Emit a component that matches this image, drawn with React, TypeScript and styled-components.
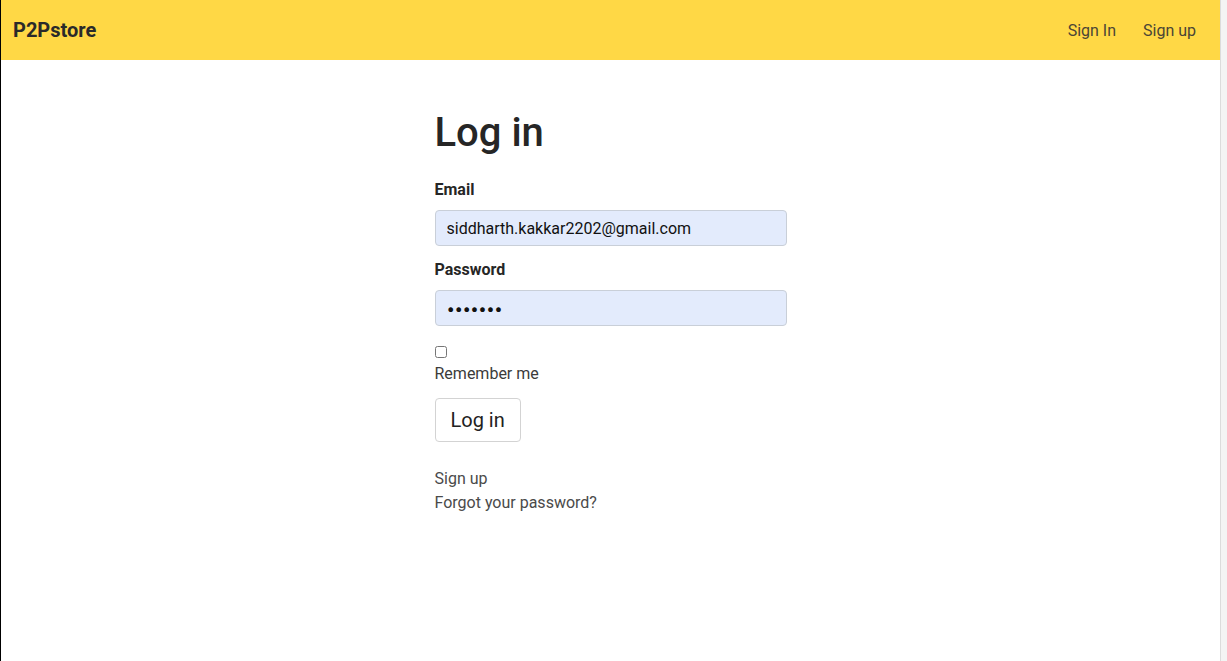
import React from "react";
import styled, { createGlobalStyle } from "styled-components";

const GlobalStyle = createGlobalStyle`
  html, body { margin: 0; padding: 0; height: 100%; }
  body {
    font-family: Roboto, "Noto Sans", "Liberation Sans", sans-serif;
    color: #212529;
    background: #ffffff;
  }
  #root { height: 100%; }
`;

const Shell = styled.div`
  display: flex;
  height: 661px;
  border-left: 1px solid #000;
  box-sizing: border-box;
`;

const Main = styled.div`
  flex: 1;
  display: flex;
  flex-direction: column;
  min-width: 0;
`;

const Gutter = styled.div`
  width: 6px;
  background: #f4f4f4;
  border-left: 1px solid #dcdcdc;
`;

const NavBar = styled.header`
  height: 60px;
  background: #ffd845;
  display: flex;
  align-items: center;
  justify-content: space-between;
  padding: 0 24px 0 12px;
`;

const Brand = styled.a`
  font-size: 20px;
  font-weight: 700;
  color: #2a2a2a;
  text-decoration: none;
`;

const NavLinks = styled.nav`
  display: flex;
  gap: 27px;
`;

const NavLink = styled.a`
  font-size: 16px;
  color: #4a4536;
  text-decoration: none;
`;

const Content = styled.main`
  width: 352px;
  margin: 0 auto;
  padding-top: 49px;
  display: flex;
  flex-direction: column;
  align-items: flex-start;
`;

const Title = styled.h1`
  font-size: 40px;
  font-weight: 500;
  line-height: 48px;
  margin: 0 0 21px;
  color: #262626;
`;

const Field = styled.div`
  display: flex;
  flex-direction: column;
  width: 100%;
  margin-bottom: ${(p: { $mb: number }) => p.$mb}px;
`;

const Label = styled.label`
  font-size: 16px;
  font-weight: 700;
  line-height: 24px;
  margin-bottom: 8px;
  color: #262626;
`;

const Input = styled.input<{ $secret?: boolean }>`
  box-sizing: border-box;
  width: 100%;
  height: 36px;
  padding: 0 11px;
  font-family: ${(p) => (p.$secret ? "Inter, sans-serif" : "inherit")};
  font-size: ${(p) => (p.$secret ? "15px" : "16px")};
  letter-spacing: ${(p) => (p.$secret ? "-0.5px" : "normal")};
  color: #111;
  background: #e3ebfc;
  border: 1px solid #c9cfd8;
  border-radius: 4px;
  outline: none;
`;

const Check = styled.input`
  width: 12px;
  height: 12px;
  margin: 0;
  accent-color: #555;
`;

const CheckLabel = styled.label`
  font-size: 16px;
  line-height: 24px;
  color: #3b3b3b;
  margin-top: 4px;
  margin-bottom: 12px;
`;

const Button = styled.button`
  box-sizing: border-box;
  height: 44px;
  padding: 0 15px;
  font-family: inherit;
  font-size: 20px;
  color: #222;
  background: #fff;
  border: 1px solid #d3d3d3;
  border-radius: 4px;
  margin-bottom: 25px;
`;

const TextLink = styled.a`
  font-size: 16px;
  line-height: 24px;
  color: #4a4a4a;
  text-decoration: none;
`;

export default function App() {
  return (
    <>
      <GlobalStyle />
      <Shell>
        <Main>
          <NavBar>
            <Brand href="#">P2Pstore</Brand>
            <NavLinks>
              <NavLink href="#">Sign In</NavLink>
              <NavLink href="#">Sign up</NavLink>
            </NavLinks>
          </NavBar>
          <Content>
            <Title>Log in</Title>
            <Field $mb={12}>
              <Label htmlFor="email">Email</Label>
              <Input id="email" type="email" defaultValue="siddharth.kakkar2202@gmail.com" />
            </Field>
            <Field $mb={20}>
              <Label htmlFor="password">Password</Label>
              <Input id="password" type="password" $secret defaultValue="1234567" />
            </Field>
            <Check type="checkbox" id="remember" />
            <CheckLabel htmlFor="remember">Remember me</CheckLabel>
            <Button type="button">Log in</Button>
            <TextLink href="#">Sign up</TextLink>
            <TextLink href="#">Forgot your password?</TextLink>
          </Content>
        </Main>
        <Gutter />
      </Shell>
    </>
  );
}
